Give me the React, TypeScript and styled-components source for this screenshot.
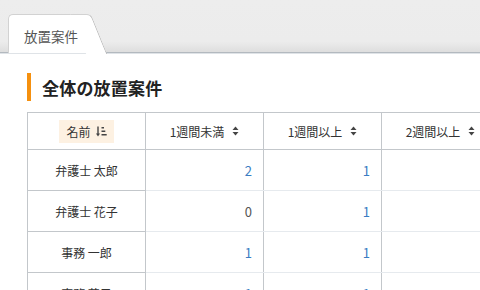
import React from "react";
import styled, { createGlobalStyle } from "styled-components";

const GlobalStyle = createGlobalStyle`
  html, body {
    margin: 0;
    padding: 0;
    background: #ffffff;
    overflow: hidden;
  }
  body {
    font-family: "Noto Sans CJK JP", "Noto Sans", sans-serif;
    color: #333333;
  }
`;

type Row = {
  name: string;
  under1: number;
  over1: number;
};

const rows: Row[] = [
  { name: "弁護士 太郎", under1: 2, over1: 1 },
  { name: "弁護士 花子", under1: 0, over1: 1 },
  { name: "事務 一郎", under1: 1, over1: 1 },
  { name: "事務 花子", under1: 1, over1: 1 },
];

function SortIcon() {
  return (
    <svg width="7" height="10" viewBox="0 0 7 10">
      <path d="M3.5 0.5 L6.5 4 H0.5 Z" fill="#444" />
      <path d="M3.5 9.5 L6.5 6 H0.5 Z" fill="#444" />
    </svg>
  );
}

function SortAmountIcon() {
  return (
    <svg width="11" height="11" viewBox="0 0 11 11">
      {/* 下向き矢印 */}
      <rect x="1.3" y="0.5" width="1.4" height="8" fill="#444" />
      <path d="M0 7.5 H4 L2 10.5 Z" fill="#444" />
      {/* 本数 */}
      <rect x="5.5" y="1" width="2.5" height="1.5" fill="#444" />
      <rect x="5.5" y="4.5" width="3.8" height="1.5" fill="#444" />
      <rect x="5.5" y="8" width="5.2" height="1.5" fill="#444" />
    </svg>
  );
}

function App() {
  return (
    <>
      <GlobalStyle />
      <Page>
        <TabBar>
          <Tab>
            <TabLabel>放置案件</TabLabel>
          </Tab>
        </TabBar>

        <Content>
          <Heading>全体の放置案件</Heading>

          <Table>
            <colgroup>
              <col style={{ width: 118 }} />
              <col style={{ width: 118 }} />
              <col style={{ width: 118 }} />
              <col style={{ width: 118 }} />
            </colgroup>
            <thead>
              <tr>
                <HeadCell>
                  <ActiveSort>
                    名前 <SortAmountIcon />
                  </ActiveSort>
                </HeadCell>
                <HeadCell>
                  <HeadLabel>
                    1週間未満 <SortIcon />
                  </HeadLabel>
                </HeadCell>
                <HeadCell>
                  <HeadLabel>
                    1週間以上 <SortIcon />
                  </HeadLabel>
                </HeadCell>
                <HeadCell>
                  <HeadLabel>
                    2週間以上 <SortIcon />
                  </HeadLabel>
                </HeadCell>
              </tr>
            </thead>
            <tbody>
              {rows.map((r) => (
                <tr key={r.name}>
                  <NameCell>{r.name}</NameCell>
                  <NumCell>
                    <Count $link={r.under1 > 0}>{r.under1}</Count>
                  </NumCell>
                  <NumCell>
                    <Count $link={r.over1 > 0}>{r.over1}</Count>
                  </NumCell>
                  <NumCell />
                </tr>
              ))}
            </tbody>
          </Table>
        </Content>
      </Page>
    </>
  );
}

const Page = styled.div`
  width: 480px;
  height: 290px;
  overflow: hidden;
`;

const TabBar = styled.div`
  height: 53px;
  box-sizing: border-box;
  padding-left: 8px;
  display: flex;
  align-items: flex-end;
  background: linear-gradient(180deg, #ededed 0%, #ececec 80%, #dedede 100%);
  border-bottom: 1px solid #b3b9bf;
  box-shadow: 0 1px 0 #dfe3e7;
`;

const Tab = styled.div`
  position: relative;
  width: 80px;
  height: 39px;
  margin-bottom: -1px;
  box-sizing: border-box;
  padding-left: 15px;
  display: flex;
  align-items: center;
  background: #ffffff;
  border-top: 1px solid #d2d2d2;
  border-left: 1px solid #d2d2d2;
  border-top-left-radius: 5px;

  &::after {
    content: "";
    position: absolute;
    top: -1px;
    left: calc(100% - 18px);
    width: 20px;
    height: calc(100% + 1px);
    background: #ffffff;
    border-top: 1px solid #d2d2d2;
    border-right: 1px solid #bdbdbd;
    border-top-right-radius: 5px;
    transform: skewX(22deg);
    transform-origin: top left;
  }
`;

const TabLabel = styled.span`
  position: relative;
  z-index: 1;
  font-size: 13.5px;
  color: #555555;
  white-space: nowrap;
  margin-top: 3px;
`;

const Content = styled.div`
  padding: 20px 0 0 27px;
`;

const Heading = styled.h2`
  margin: 0;
  height: 28px;
  display: flex;
  align-items: center;
  padding-left: 11px;
  border-left: 4px solid #f5900f;
  font-size: 17px;
  font-weight: 700;
  color: #222222;
  letter-spacing: 0.2px;
`;

const Table = styled.table`
  margin-top: 11px;
  border-collapse: collapse;
  table-layout: fixed;
  width: 472px;
  font-size: 12px;
`;

const HeadCell = styled.th`
  height: 36px;
  padding: 0;
  border: 1px solid #c3c7cb;
  font-weight: 400;
  color: #333333;
  text-align: center;
  white-space: nowrap;
`;

const HeadLabel = styled.span`
  display: inline-flex;
  align-items: center;
  gap: 8px;
`;

const ActiveSort = styled.span`
  display: inline-flex;
  align-items: center;
  gap: 5px;
  height: 23px;
  padding: 0 7px;
  background: #fdf1e2;
`;

const NameCell = styled.td`
  height: 40px;
  padding: 0;
  text-align: center;
  border: 1px solid #c3c7cb;
  color: #333333;
  white-space: nowrap;
`;

const NumCell = styled.td`
  height: 40px;
  padding: 0 11px 0 0;
  text-align: right;
  border-left: 1px solid #c3c7cb;
  border-right: 1px solid #c3c7cb;
  border-top: 1px solid #e6eaee;
  border-bottom: 1px solid #e6eaee;
  font-size: 13px;
`;

const Count = styled.span<{ $link: boolean }>`
  color: ${(p) => (p.$link ? "#3a7cc2" : "#555555")};
`;

export default App;
